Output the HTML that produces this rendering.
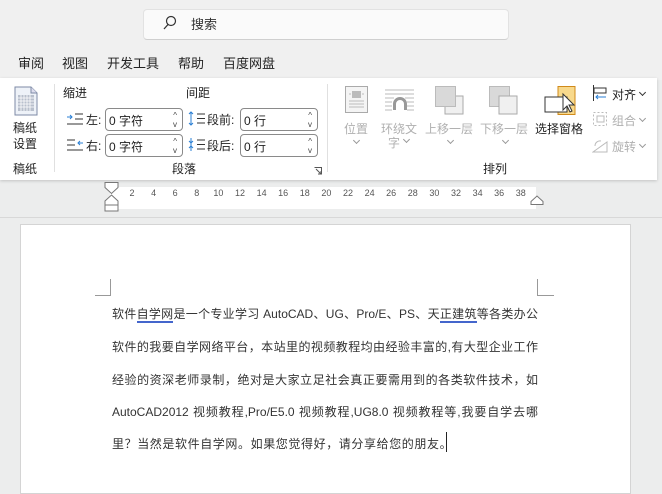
<!DOCTYPE html>
<html><head><meta charset="utf-8"><style>
*{margin:0;padding:0;box-sizing:border-box}
body{width:662px;height:484px;overflow:hidden;background:#eceded;font-family:"Liberation Sans","Noto Sans CJK SC",sans-serif;position:relative;color:#222}
.a{position:absolute;white-space:nowrap}
.top{position:absolute;left:0;top:0;width:662px;height:80px;background:#f0f0f0}
.search{position:absolute;left:143px;top:9px;width:366px;height:31px;background:#fafafa;border:1px solid #e2e2e2;border-bottom:1px solid #cfcfcf;border-radius:4px}
.tab{font-size:13px;top:53px;color:#222}
.rib{position:absolute;left:0;top:78px;width:657px;height:102px;background:#fff;box-shadow:0 1px 3px rgba(0,0,0,.18)}
.s12{font-size:12px}
.spin{position:absolute;height:23px;border:1px solid #8a8a8a;border-radius:4px;background:#fff;font-size:12px;padding:3px 0 0 3px}
.spin i{position:absolute;right:5px;font-style:normal;font-size:8px;color:#444;line-height:8px}
.gray{color:#b0b0b0}
.sep{position:absolute;width:1px;background:#e0e0e0}
.rul{position:absolute;left:110px;top:187px;width:426px;height:22px;background:#fff}
.num{position:absolute;top:188px;font-size:9px;color:#555;width:20px;text-align:center}
.page{position:absolute;left:20px;top:224px;width:611px;height:270px;background:#fff;border:1px solid #d4d4d4}
.ln{position:absolute;left:112px;width:426px;font-size:12px;color:#333;text-align:justify;text-align-last:justify;height:18px;overflow:visible}
.ln.last{text-align-last:left}
.u{border-bottom:2px double #4466cc}
.chev{position:absolute;width:5px;height:5px;border-right:1px solid #999;border-bottom:1px solid #999;transform:rotate(45deg)}
</style></head><body>
<div class="top"></div>
<div class="search"></div>
<svg class="a" style="left:163px;top:15px" width="14" height="16" viewBox="0 0 14 16"><circle cx="8" cy="6" r="4.5" fill="none" stroke="#333" stroke-width="1.2"/><path d="M5 9.5 L1 14" stroke="#333" stroke-width="1.3"/></svg>
<div class="a" style="left:191px;top:14px;font-size:13px;color:#333">搜索</div>
<div class="a tab" style="left:18px">审阅</div>
<div class="a tab" style="left:62px">视图</div>
<div class="a tab" style="left:107px">开发工具</div>
<div class="a tab" style="left:178px">帮助</div>
<div class="a tab" style="left:223px">百度网盘</div>
<div class="rib"></div>
<svg class="a" style="left:13px;top:86px" width="26" height="30" viewBox="0 0 26 30"><path d="M2 1h16l6 6v22H2z" fill="#eef2f8" stroke="#7d8aa6"/><path d="M18 1v6h6" fill="#dde" stroke="#7d8aa6"/><rect x="5" y="9" width="16" height="16" fill="#b8bfcc"/><g stroke="#fff" stroke-width=".8"><path d="M5 12h16M5 15h16M5 18h16M5 21h16M8 9v16M11 9v16M14 9v16M17 9v16"/></g></svg>
<div class="a s12" style="left:13px;top:119px">稿纸</div>
<div class="a s12" style="left:13px;top:135px">设置</div>
<div class="a s12" style="left:13px;top:160px">稿纸</div>
<div class="sep" style="left:54px;top:84px;height:88px"></div>
<div class="a s12" style="left:63px;top:84px">缩进</div>
<div class="a s12" style="left:186px;top:84px">间距</div>
<svg class="a" style="left:67px;top:113px" width="16" height="12"><path d="M0 4h5M3 2l2 2-2 2" fill="none" stroke="#2a7fd4"/><path d="M8 1h8M8 6h8M0 11h16" stroke="#333"/></svg>
<div class="a s12" style="left:86px;top:111px">左:</div>
<div class="spin" style="left:105px;top:108px;width:78px">0 字符<i style="top:3px">^</i><i style="top:12px">v</i></div>
<svg class="a" style="left:67px;top:139px" width="16" height="12"><path d="M0 1h8M0 6h8M0 11h16" stroke="#333"/><path d="M16 4h-5M13 2l-2 2 2 2" fill="none" stroke="#2a7fd4"/></svg>
<div class="a s12" style="left:86px;top:137px">右:</div>
<div class="spin" style="left:105px;top:134px;width:78px">0 字符<i style="top:3px">^</i><i style="top:12px">v</i></div>
<svg class="a" style="left:188px;top:111px" width="18" height="15"><path d="M3 1v13M1 3l2-2 2 2M1 12l2 2 2-2" fill="none" stroke="#2a7fd4"/><path d="M9 3h8M9 7.5h8M9 12h8" stroke="#333"/></svg>
<div class="a s12" style="left:207px;top:111px">段前:</div>
<div class="spin" style="left:240px;top:108px;width:78px">0 行<i style="top:3px">^</i><i style="top:12px">v</i></div>
<svg class="a" style="left:188px;top:137px" width="18" height="15"><path d="M3 1v13M1 4l2 2 2-2M1 11l2-2 2 2" fill="none" stroke="#2a7fd4"/><path d="M9 3h8M9 7.5h8M9 12h8" stroke="#333"/></svg>
<div class="a s12" style="left:207px;top:137px">段后:</div>
<div class="spin" style="left:240px;top:134px;width:78px">0 行<i style="top:3px">^</i><i style="top:12px">v</i></div>
<div class="a s12" style="left:172px;top:160px">段落</div>
<svg class="a" style="left:314px;top:167px" width="8" height="8"><path d="M.5 .5h7v7M2 2l5 5M4 7h3V4" fill="none" stroke="#555"/></svg>
<div class="sep" style="left:327px;top:84px;height:88px"></div>
<svg class="a" style="left:345px;top:86px" width="23" height="27"><rect x=".5" y=".5" width="22" height="26" fill="#f4f4f4" stroke="#aaa"/><rect x="7" y="5" width="9" height="7" fill="#bbb"/><path d="M4 15h15M4 18h15M4 21h15M4 8h2M17 8h2" stroke="#bbb"/></svg>
<div class="a s12 gray" style="left:344px;top:120px">位置</div>
<div class="chev" style="left:354px;top:138px"></div>
<svg class="a" style="left:385px;top:88px" width="30" height="24"><path d="M0 2h29M0 6h29M0 10h9M20 10h9M0 14h7M22 14h7M0 18h7M22 18h7M0 22h7M22 22h7" stroke="#bbb"/><path d="M8 22v-6a7 7 0 0 1 14 0v6h-3v-6a4 4 0 0 0-8 0v6z" fill="#999"/></svg>
<div class="a s12 gray" style="left:381px;top:120px">环绕文</div>
<div class="a s12 gray" style="left:388px;top:134px">字</div>
<div class="chev" style="left:404px;top:137px"></div>
<svg class="a" style="left:435px;top:86px" width="30" height="30"><rect x="10" y="10" width="18" height="18" fill="#f0f0f0" stroke="#aaa"/><rect x=".5" y=".5" width="20" height="20" fill="#d9d9d9" stroke="#bbb"/></svg>
<div class="a s12 gray" style="left:425px;top:120px">上移一层</div>
<div class="chev" style="left:448px;top:138px"></div>
<svg class="a" style="left:489px;top:86px" width="30" height="30"><rect x=".5" y=".5" width="20" height="20" fill="#d9d9d9" stroke="#bbb"/><rect x="10" y="10" width="18" height="18" fill="#f0f0f0" stroke="#aaa"/></svg>
<div class="a s12 gray" style="left:480px;top:120px">下移一层</div>
<div class="chev" style="left:503px;top:138px"></div>
<svg class="a" style="left:544px;top:86px" width="34" height="32"><rect x="14" y=".5" width="17" height="28" fill="#f8d98c" stroke="#d08a1a"/><rect x="1" y="11" width="22" height="15" fill="#fff" stroke="#333"/><path d="M19 8v16l4-4 3 6 2-1-3-6h5z" fill="#fff" stroke="#333"/></svg>
<div class="a s12" style="left:535px;top:120px">选择窗格</div>
<svg class="a" style="left:592px;top:85px" width="16" height="16"><path d="M1.5 0v16" stroke="#333"/><rect x="2" y="3" width="12" height="5" fill="#fff" stroke="#333"/><path d="M14 12H4M6 10l-2 2 2 2" fill="none" stroke="#2a7fd4"/></svg>
<div class="a s12" style="left:612px;top:86px">对齐</div><div class="chev" style="left:640px;top:90px;border-color:#333"></div>
<svg class="a" style="left:592px;top:111px" width="16" height="16"><rect x="1.5" y="1.5" width="13" height="13" fill="none" stroke="#bbb" stroke-dasharray="2 2"/><rect x="5" y="5" width="7" height="6" fill="none" stroke="#bbb"/></svg>
<div class="a s12 gray" style="left:612px;top:112px">组合</div><div class="chev" style="left:640px;top:116px"></div>
<svg class="a" style="left:592px;top:137px" width="16" height="16"><path d="M1 15h14V5z" fill="none" stroke="#bbb"/><path d="M3 9a5 5 0 0 1 6-5" fill="none" stroke="#bbb"/></svg>
<div class="a s12 gray" style="left:612px;top:138px">旋转</div><div class="chev" style="left:640px;top:142px"></div>
<div class="a s12" style="left:483px;top:160px">排列</div>
<div class="rul"></div>
<div class="sep" style="left:0;top:217px;width:662px;height:1px;background:#d8d8d8"></div>
<svg class="a" style="left:104px;top:182px" width="16" height="30"><path d="M1 .5h13v5l-6.5 6-6.5-6z" fill="#fff" stroke="#777"/><path d="M7.5 13l6.5 6v4H1v-4z" fill="#fff" stroke="#777"/><rect x="1" y="23" width="13" height="6" fill="#fff" stroke="#777"/></svg>
<svg class="a" style="left:530px;top:195px" width="14" height="10"><path d="M1 9.5v-3l6-5.5 6 5.5v3z" fill="#fff" stroke="#777"/></svg>
<div class="num" style="left:122px">2</div><div class="num" style="left:143.6px">4</div><div class="num" style="left:165.2px">6</div><div class="num" style="left:186.8px">8</div><div class="num" style="left:208.4px">10</div><div class="num" style="left:230px">12</div><div class="num" style="left:251.6px">14</div><div class="num" style="left:273.2px">16</div><div class="num" style="left:294.8px">18</div><div class="num" style="left:316.4px">20</div><div class="num" style="left:338px">22</div><div class="num" style="left:359.6px">24</div><div class="num" style="left:381.2px">26</div><div class="num" style="left:402.8px">28</div><div class="num" style="left:424.4px">30</div><div class="num" style="left:446px">32</div><div class="num" style="left:467.6px">34</div><div class="num" style="left:489.2px">36</div><div class="num" style="left:510.8px">38</div>
<div class="page"></div>
<svg class="a" style="left:95px;top:279px" width="460" height="18"><path d="M0 16.5h15.5V0M459 16.5h-16.5V0" fill="none" stroke="#999"/></svg>
<div class="ln" style="top:305px">软件<span class="u">自学网</span>是一个专业学习 AutoCAD、UG、Pro/E、PS、天<span class="u">正建筑</span>等各类办公</div>
<div class="ln" style="top:338px">软件的我要自学网络平台，本站里的视频教程均由经验丰富的,有大型企业工作</div>
<div class="ln" style="top:371px">经验的资深老师录制，绝对是大家立足社会真正要需用到的各类软件技术，如</div>
<div class="ln" style="top:403px">AutoCAD2012 视频教程,Pro/E5.0 视频教程,UG8.0 视频教程等,我要自学去哪</div>
<div class="ln last" style="top:435px;letter-spacing:0.6px">里？当然是软件自学网。如果您觉得好，请分享给您的朋友。</div>
<div class="a" style="left:446px;top:432px;width:1px;height:20px;background:#222"></div>
</body></html>
